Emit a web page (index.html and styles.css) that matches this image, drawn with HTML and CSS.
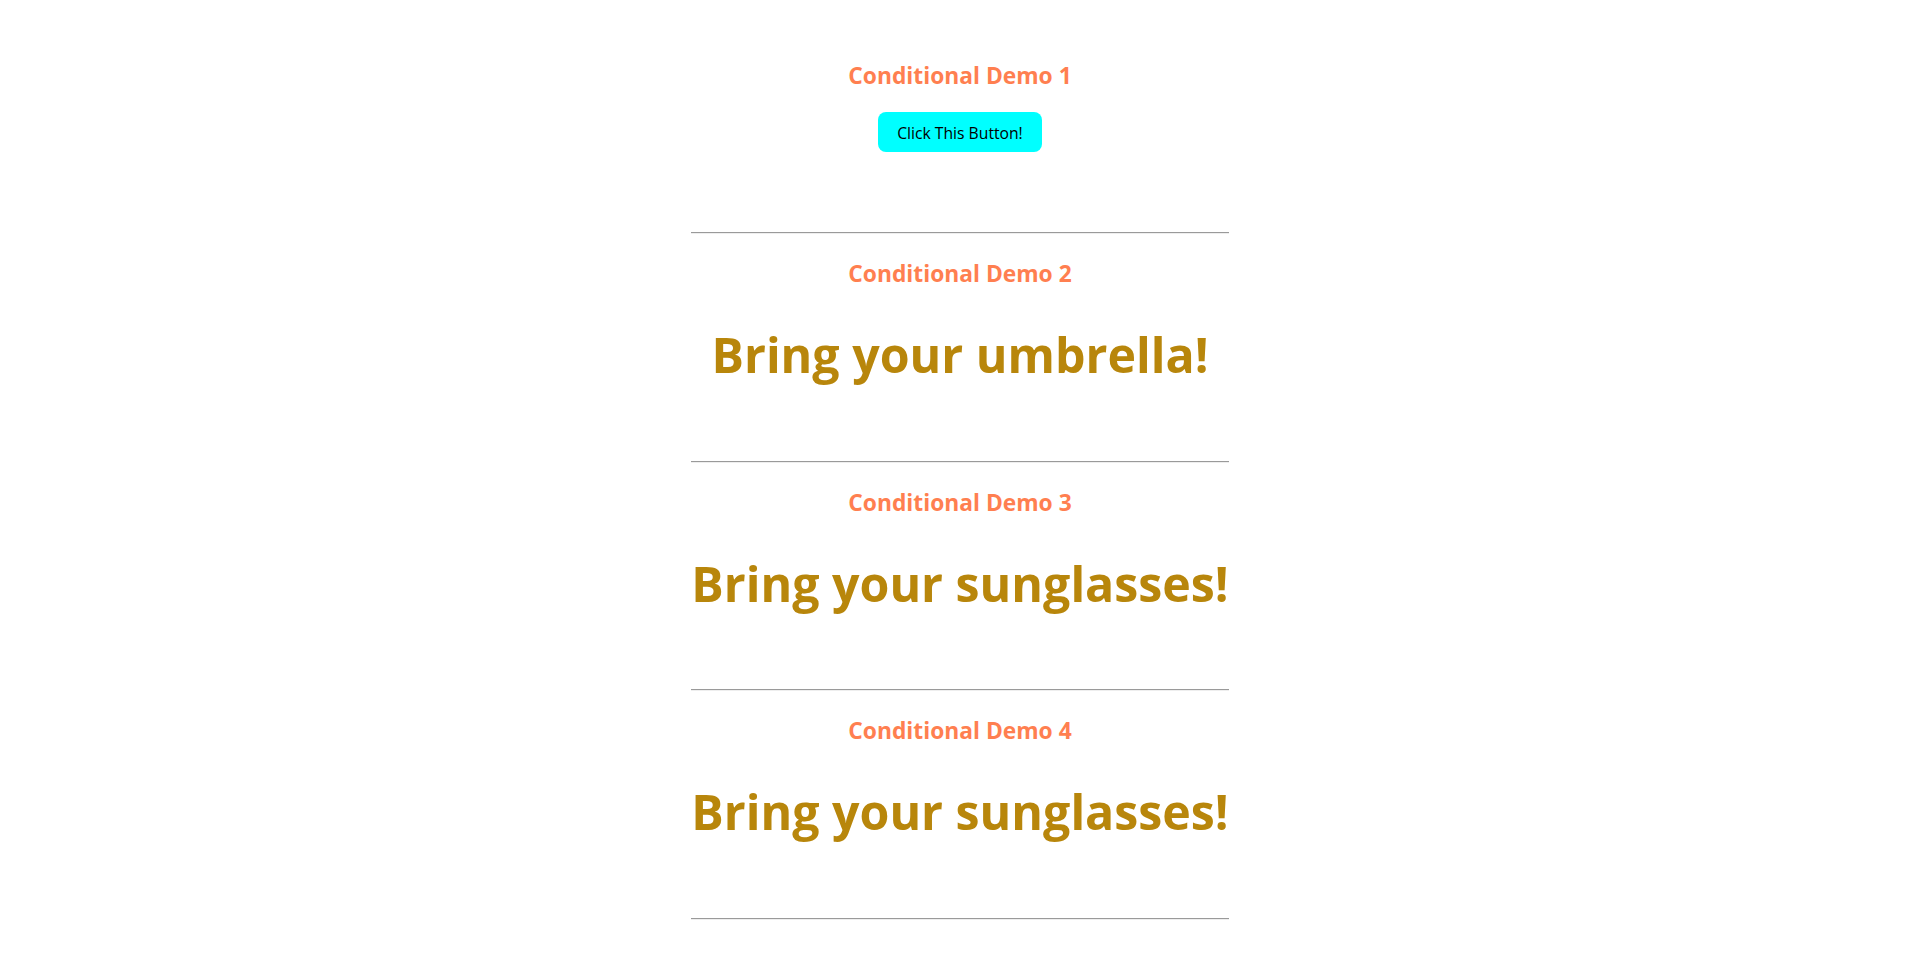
FILE: index.html
```html
<!DOCTYPE html>
<html lang="en">
<head>
<meta charset="utf-8">
<title>Conditional Demos</title>
<link rel="stylesheet" href="styles.css">
</head>
<body>
<main class="page">
  <section class="demo demo-first">
    <h2 class="demo-title">Conditional Demo 1</h2>
    <button class="demo-button" type="button">Click This Button!</button>
  </section>
  <hr class="divider">
  <section class="demo">
    <h2 class="demo-title">Conditional Demo 2</h2>
    <h1 class="demo-message">Bring your umbrella!</h1>
  </section>
  <hr class="divider">
  <section class="demo">
    <h2 class="demo-title">Conditional Demo 3</h2>
    <h1 class="demo-message">Bring your sunglasses!</h1>
  </section>
  <hr class="divider">
  <section class="demo">
    <h2 class="demo-title">Conditional Demo 4</h2>
    <h1 class="demo-message">Bring your sunglasses!</h1>
  </section>
  <hr class="divider">
</main>
</body>
</html>
```
FILE: styles.css
```css
html, body {
  margin: 0;
  padding: 0;
  background: #ffffff;
}

body {
  font-family: "Open Sans", "Noto Sans", sans-serif;
}

.page {
  width: fit-content;
  margin: 0 auto;
}

.demo {
  display: flex;
  flex-direction: column;
  align-items: center;
  padding: 24px 0 74.5px;
}

.demo-first {
  padding: 60px 0 80px;
}

.demo-title {
  margin: 0;
  font-size: 22.8px;
  line-height: 32px;
  font-weight: 700;
  color: #ff7f50;
  white-space: nowrap;
}

.demo-message {
  margin: 32px 0 0;
  font-size: 48.3px;
  line-height: 64px;
  font-weight: 700;
  color: #b8860b;
  white-space: nowrap;
}

.demo-button {
  margin-top: 20px;
  padding: 9px 19px 7px;
  border: none;
  border-radius: 8px;
  background: #00ffff;
  color: #000000;
  font-family: "Open Sans", "Noto Sans", sans-serif;
  font-size: 15.7px;
  line-height: 24px;
  cursor: pointer;
}

.divider {
  margin: 0;
  height: 0;
  border: 0;
  border-top: 1px solid #9a9a9a;
  border-bottom: 1px solid #eeeeee;
}
```
